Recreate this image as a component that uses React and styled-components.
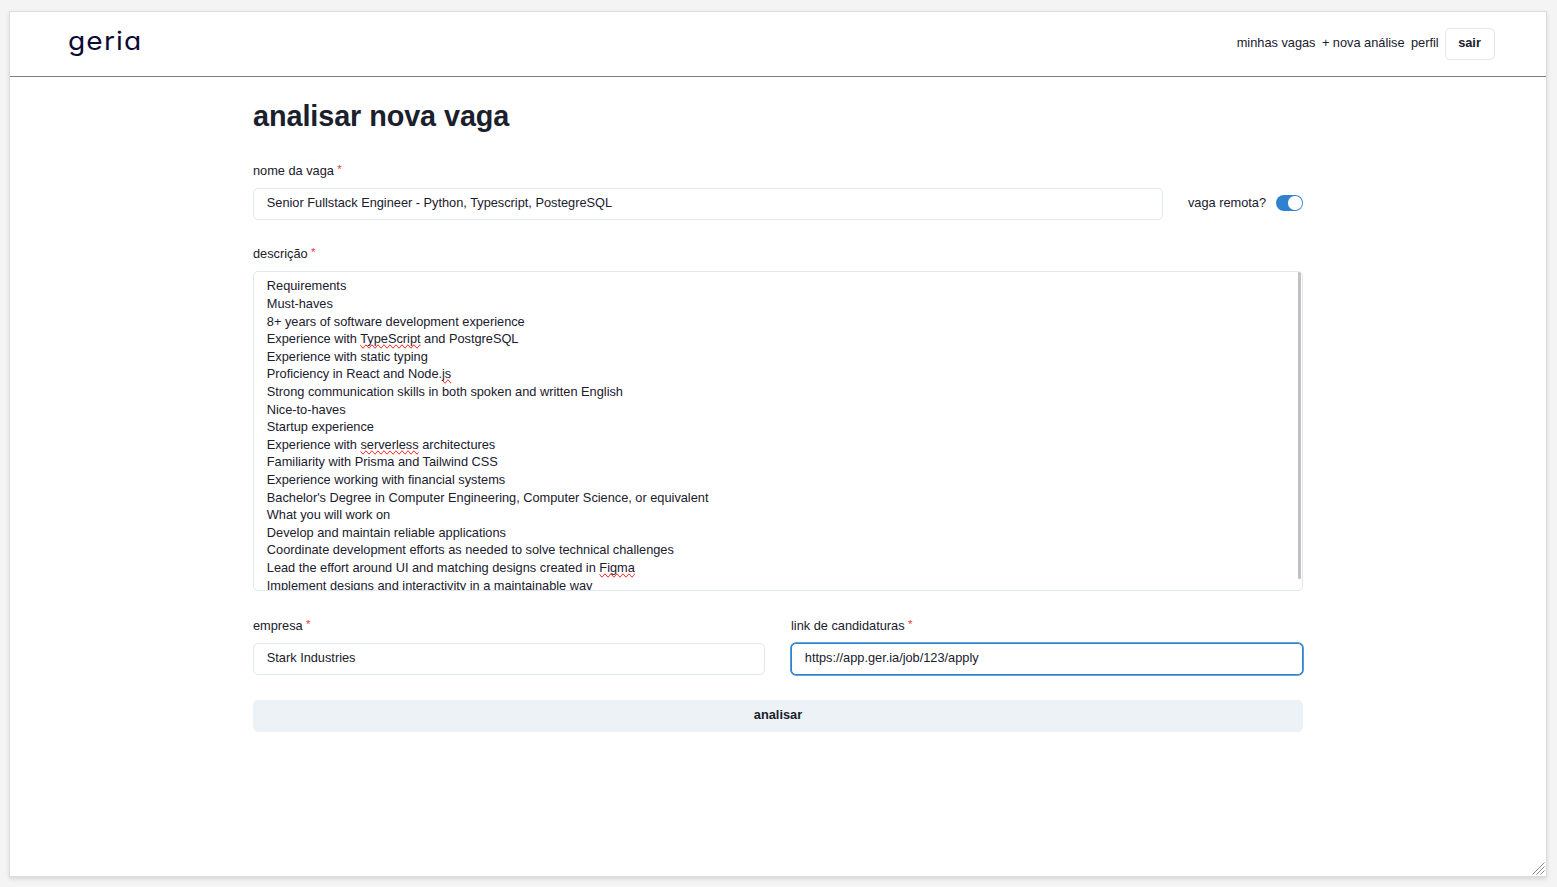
import React from 'react';
import styled, { createGlobalStyle, css } from 'styled-components';

const GlobalStyle = createGlobalStyle`
  *, *::before, *::after { box-sizing: border-box; }
  body {
    margin: 0;
    background: #f4f4f4;
    color: #1a202c;
    font-family: "Liberation Sans", Arial, sans-serif;
    font-size: 12.8px;
    line-height: 19.2px;
    letter-spacing: -0.015px;
  }
  h1 { margin: 0; }
  input, button { font: inherit; color: inherit; letter-spacing: inherit; }
`;

const Page = styled.div`
  height: 887px;
  padding: 11px 10px 9px 9px;
  overflow: hidden;
`;

const Frame = styled.div`
  position: relative;
  height: 866px;
  background: #fff;
  border: 1px solid #dcdcdc;
  box-shadow: 0 2px 4px rgba(0, 0, 0, 0.12);
`;

const Header = styled.header`
  display: flex;
  align-items: center;
  justify-content: space-between;
  height: 65px;
  padding: 0 51px 1px 58px;
  border-bottom: 1px solid #808080;
`;

const Logo = styled.div`
  padding-bottom: 6px;
  font-family: Inter, sans-serif;
  font-size: 25.6px;
  font-weight: 370;
  line-height: 32px;
  letter-spacing: 1px;
  font-feature-settings: "cv11" 1;
  color: #0b0a35;
  transform: scaleX(1.1);
  transform-origin: left center;
`;

const Nav = styled.nav`
  display: flex;
  align-items: center;
  gap: 6.4px;
`;

const NavLink = styled.a`
  padding-bottom: 2px;
`;

const LogoutButton = styled.button`
  height: 32px;
  width: 50px;
  padding: 0 1px 1px 0;
  background: #fff;
  border: 1px solid #e2e8f0;
  border-radius: 5px;
  font-weight: 700;
`;

const Main = styled.main`
  width: 1050px;
  margin: 0 auto 0 243px;
  padding-top: 20px;
`;

const Title = styled.h1`
  font-size: 28.8px;
  line-height: 38px;
  font-weight: 700;
  letter-spacing: -0.08px;
`;

const Form = styled.form`
  display: flex;
  flex-direction: column;
  padding-top: 26px;
`;

const Row = styled.div`
  display: flex;
  align-items: flex-end;
  gap: 26px;
  margin-bottom: ${(p) => p.$gap}px;
`;

const Field = styled.div`
  display: flex;
  flex: 1;
  flex-direction: column;
  min-width: 0;
`;

const Label = styled.label`
  height: 27px;
  line-height: 19px;
`;

const Required = styled.span`
  display: inline-block;
  margin-left: 3.4px;
  color: #e53e3e;
  font-size: 11.5px;
  line-height: 13px;
  vertical-align: 2px;
`;

const Input = styled.input`
  width: 100%;
  height: 32px;
  padding: 0 12.8px 3px;
  background: #fff;
  border: 1px solid #e2e8f0;
  border-radius: 5px;
  outline: none;
  ${(p) => p.$active && css`
    border-color: #3182ce;
    box-shadow: 0 0 0 0.8px #3182ce;
  `}
`;

const RemoteToggle = styled.div`
  display: flex;
  align-items: center;
  gap: 10px;
  height: 32px;
  width: 114px;
  justify-content: flex-end;
  padding-bottom: 2px;
  white-space: nowrap;
`;

const Switch = styled.span`
  display: flex;
  flex-shrink: 0;
  justify-content: flex-end;
  width: 27px;
  height: 16px;
  padding: 1.4px;
  border-radius: 8px;
  background: #3182ce;
`;

const Knob = styled.span`
  width: 13.2px;
  height: 13.2px;
  border-radius: 50%;
  background: #fff;
`;

const Description = styled.div`
  display: flex;
  justify-content: space-between;
  height: 320px;
  padding-left: 12.8px;
  border: 1px solid #e2e8f0;
  border-radius: 5px;
  overflow: hidden;
`;

const Lines = styled.div`
  padding-top: 5.46px;
  line-height: 17.6px;
  white-space: pre;
`;

const Misspelled = styled.span`
  text-decoration-line: spelling-error;
`;

const ScrollThumb = styled.div`
  width: 3px;
  height: 307px;
  margin-right: 1px;
  background: #c1c1c1;
  border-radius: 0 0 1px 1px;
`;

const SubmitButton = styled.button`
  height: 32px;
  padding: 0 0 3px;
  border: 0;
  border-radius: 5px;
  background: #edf2f7;
  font-weight: 700;
`;

const ResizeGrip = styled.svg`
  position: absolute;
  right: 1px;
  bottom: 1px;
`;

const lines = [
  ['Requirements'],
  ['Must-haves'],
  ['8+ years of software development experience'],
  ['Experience with ', 'TypeScript', ' and PostgreSQL'],
  ['Experience with static typing'],
  ['Proficiency in React and Node.', 'js'],
  ['Strong communication skills in both spoken and written English'],
  ['Nice-to-haves'],
  ['Startup experience'],
  ['Experience with ', 'serverless', ' architectures'],
  ['Familiarity with Prisma and Tailwind CSS'],
  ['Experience working with financial systems'],
  ["Bachelor's Degree in Computer Engineering, Computer Science, or equivalent"],
  ['What you will work on'],
  ['Develop and maintain reliable applications'],
  ['Coordinate development efforts as needed to solve technical challenges'],
  ['Lead the effort around UI and matching designs created in ', 'Figma'],
  ['Implement designs and interactivity in a maintainable way'],
];

function FieldLabel({ children }) {
  return (
    <Label>
      {children}
      <Required>*</Required>
    </Label>
  );
}

export default function App() {
  return (
    <Page>
      <GlobalStyle />
      <Frame>
        <Header>
          <Logo>geria</Logo>
          <Nav>
            <NavLink>minhas vagas</NavLink>
            <NavLink>+ nova análise</NavLink>
            <NavLink>perfil</NavLink>
            <LogoutButton>sair</LogoutButton>
          </Nav>
        </Header>
        <Main>
          <Title>analisar nova vaga</Title>
          <Form>
            <Row $gap={24}>
              <Field>
                <FieldLabel>nome da vaga</FieldLabel>
                <Input readOnly value="Senior Fullstack Engineer - Python, Typescript, PostegreSQL" />
              </Field>
              <RemoteToggle>
                vaga remota?
                <Switch><Knob /></Switch>
              </RemoteToggle>
            </Row>
            <Row $gap={25}>
              <Field>
                <FieldLabel>descrição</FieldLabel>
                <Description>
                  <Lines>
                    {lines.map(([before, word, after]) => (
                      <div key={before + (word || '')}>
                        {before}
                        {word && <Misspelled>{word}</Misspelled>}
                        {after}
                      </div>
                    ))}
                  </Lines>
                  <ScrollThumb />
                </Description>
              </Field>
            </Row>
            <Row $gap={25}>
              <Field>
                <FieldLabel>empresa</FieldLabel>
                <Input readOnly value="Stark Industries" />
              </Field>
              <Field>
                <FieldLabel>link de candidaturas</FieldLabel>
                <Input readOnly $active value="https://app.ger.ia/job/123/apply" />
              </Field>
            </Row>
            <SubmitButton type="button">analisar</SubmitButton>
          </Form>
        </Main>
        <ResizeGrip width="13" height="13" viewBox="0 0 13 13" fill="none" stroke="#8c8c8c" strokeWidth="1">
          <path d="M0.5 12.5L12.5 0.5M4.5 12.5L12.5 4.5M8.5 12.5L12.5 8.5" />
        </ResizeGrip>
      </Frame>
    </Page>
  );
}
